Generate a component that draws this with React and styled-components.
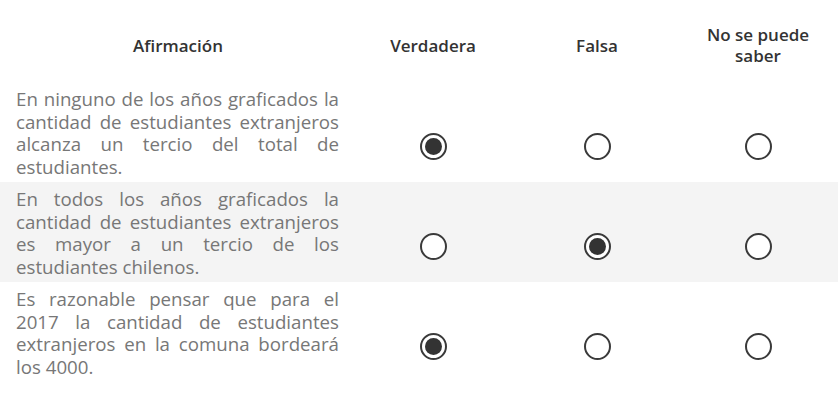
import React from "react";
import styled, { createGlobalStyle } from "styled-components";

const Global = createGlobalStyle`
  html, body { margin: 0; padding: 0; background: #fff; }
  body { font-family: "Open Sans", "Liberation Sans", sans-serif; }
`;

const Table = styled.div`
  width: 838px;
  display: flex;
  flex-direction: column;
`;

const Row = styled.div`
  display: grid;
  grid-template-columns: 350px 166px 162px 160px;
  height: ${(p) => p.$h}px;
  background: ${(p) => (p.$alt ? "#f4f4f4" : "#fff")};
`;

const HeadCell = styled.div`
  display: flex;
  align-items: center;
  justify-content: center;
  text-align: center;
  padding: 8px 0 0 0;
  padding-left: ${(p) => (p.$first ? "16px" : "0")};
  padding-right: ${(p) => (p.$first ? "10px" : "0")};
  font-size: 17px;
  font-weight: 600;
  line-height: 21px;
  color: #333;
`;

const TextCell = styled.div`
  padding: 6px 11px 0 16px;
  font-size: 18.7px;
  line-height: 22.5px;
  color: #777;
  text-align: justify;
`;

const RadioCell = styled.div`
  display: flex;
  align-items: center;
  justify-content: center;
  padding-top: 28px;
`;

const Radio = styled.span`
  box-sizing: border-box;
  width: 27px;
  height: 27px;
  border-radius: 50%;
  border: 2px solid #3a3a3a;
  background: #fff;
  display: flex;
  align-items: center;
  justify-content: center;
  &::after {
    content: "";
    width: 17px;
    height: 17px;
    border-radius: 50%;
    background: #333;
    display: ${(p) => (p.$checked ? "block" : "none")};
  }
`;

const rows = [
  {
    text: "En ninguno de los años graficados la cantidad de estudiantes extranjeros alcanza un tercio del total de estudiantes.",
    sel: 0,
  },
  {
    text: "En todos los años graficados la cantidad de estudiantes extranjeros es mayor a un tercio de los estudiantes chilenos.",
    sel: 1,
  },
  {
    text: "Es razonable pensar que para el 2017 la cantidad de estudiantes extranjeros en la comuna bordeará los 4000.",
    sel: 0,
  },
];

export default function App() {
  return (
    <>
      <Global />
      <Table>
        <Row $h={82}>
          <HeadCell $first>Afirmación</HeadCell>
          <HeadCell>Verdadera</HeadCell>
          <HeadCell>Falsa</HeadCell>
          <HeadCell>
            No se puede
            <br />
            saber
          </HeadCell>
        </Row>
        {rows.map((r, i) => (
          <Row key={i} $h={100} $alt={i === 1}>
            <TextCell>{r.text}</TextCell>
            {[0, 1, 2].map((j) => (
              <RadioCell key={j}>
                <Radio $checked={r.sel === j} />
              </RadioCell>
            ))}
          </Row>
        ))}
      </Table>
    </>
  );
}
